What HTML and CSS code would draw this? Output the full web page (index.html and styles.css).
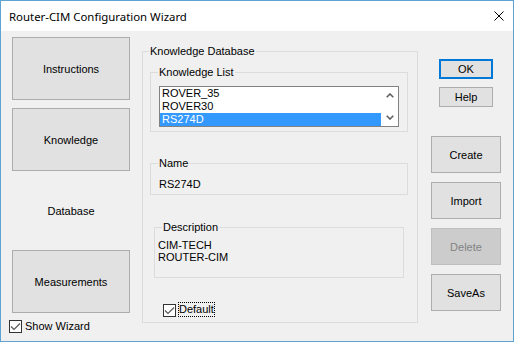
FILE: index.html
```html
<!DOCTYPE html>
<html>
<head>
<meta charset="utf-8">
<link rel="stylesheet" href="styles.css">
</head>
<body>
<div class="window">
  <div class="titlebar">
    <span class="title">Router-CIM Configuration Wizard</span>
    <svg class="close" width="10" height="10" viewBox="0 0 10 10"><path d="M0.5 0.5 L9.5 9.5 M9.5 0.5 L0.5 9.5" stroke="#000" stroke-width="1" fill="none"/></svg>
  </div>
  <div class="client">
    <div class="nav">
      <button class="btn navbtn">Instructions</button>
      <button class="btn navbtn">Knowledge</button>
      <div class="navlabel">Database</div>
      <button class="btn navbtn">Measurements</button>
      <label class="check show">
        <span class="box"><svg width="11" height="11" viewBox="0 0 11 11"><path d="M1 5.5 L4 8.5 L10 2.5" stroke="#555" stroke-width="1.1" fill="none"/></svg></span>
        <span class="check-text">Show Wizard</span>
      </label>
    </div>

    <fieldset class="group outer">
      <legend>Knowledge Database</legend>
      <fieldset class="group list-group">
        <legend>Knowledge List</legend>
        <div class="listbox">
          <ul class="items">
            <li>ROVER_35</li>
            <li>ROVER30</li>
            <li class="sel">RS274D</li>
          </ul>
          <div class="scroll">
            <svg width="8" height="5" viewBox="0 0 8 5"><path d="M0.7 4.3 L4 1 L7.3 4.3" stroke="#606060" stroke-width="1.6" fill="none"/></svg>
            <svg width="8" height="5" viewBox="0 0 8 5"><path d="M0.7 0.7 L4 4 L7.3 0.7" stroke="#606060" stroke-width="1.6" fill="none"/></svg>
          </div>
        </div>
      </fieldset>
      <fieldset class="group name-group">
        <legend>Name</legend>
        <div class="value">RS274D</div>
      </fieldset>
      <fieldset class="group desc-group">
        <legend>Description</legend>
        <div class="desc">CIM-TECH<br>ROUTER-CIM</div>
      </fieldset>
      <label class="check default">
        <span class="box"><svg width="11" height="11" viewBox="0 0 11 11"><path d="M1 5.5 L4 8.5 L10 2.5" stroke="#555" stroke-width="1.1" fill="none"/></svg></span>
        <span class="focus">Default</span>
      </label>
    </fieldset>

    <div class="actions">
      <button class="btn small ok">OK</button>
      <button class="btn small help">Help</button>
      <button class="btn big create">Create</button>
      <button class="btn big">Import</button>
      <button class="btn big disabled">Delete</button>
      <button class="btn big">SaveAs</button>
    </div>
  </div>
</div>
</body>
</html>
```

FILE: styles.css
```css
* { box-sizing: border-box; }
html, body { margin: 0; padding: 0; }
body {
  font-family: "Liberation Sans", Arial, sans-serif;
  font-size: 11px;
  color: #000;
  background: #fff;
}
.window {
  width: 514px;
  height: 342px;
  border: 1px solid #5ea3d4;
  display: flex;
  flex-direction: column;
  background: #f0f0f0;
}
.titlebar {
  flex: none;
  height: 30px;
  background: #fff;
  display: flex;
  align-items: center;
  justify-content: space-between;
  padding: 0 9px 0 8px;
}
.title {
  font-family: "Segoe UI", "Noto Sans", sans-serif;
  font-size: 11.4px;
}
.close { display: block; }

.client {
  flex: 1;
  display: flex;
  align-items: flex-start;
  padding: 6px 0 0 8px;
}

.btn {
  font: inherit;
  color: #000;
  background: #e1e1e1;
  border: 1px solid #adadad;
  padding: 0;
  margin: 0;
  display: flex;
  align-items: center;
  justify-content: center;
}

.nav {
  width: 121px;
  flex: none;
  display: flex;
  flex-direction: column;
  gap: 8px;
}
.navbtn, .navlabel {
  margin-left: 3px;
  width: 118px;
  height: 63px;
}
.navlabel {
  display: flex;
  align-items: center;
  justify-content: center;
}

.check {
  display: flex;
  align-items: flex-end;
}
.box {
  width: 13px;
  height: 13px;
  border: 1px solid #333;
  background: #fff;
  display: block;
  flex: none;
}
.box svg { display: block; }
.show {
  margin-top: -1px;
  height: 13px;
  align-items: center;
}
.check-text { margin-left: 3px; line-height: 13px; }

.group {
  margin: 0;
  padding: 0;
  border: 1px solid #dcdcdc;
  min-width: 0;
}
.group > legend {
  padding: 0 1px;
  margin-left: 6px;
  line-height: 13px;
  height: 13px;
}
.outer {
  flex: none;
  margin: 8px 0 0 12px;
  width: 276px;
  padding-bottom: 5px;
}
.list-group {
  margin: 8px 0 0 7px;
  width: 258px;
  padding-bottom: 4px;
}
.list-group > legend, .name-group > legend, .desc-group > legend { margin-left: 7px; }

.listbox {
  margin: 7px 0 0 8px;
  width: 240px;
  height: 41px;
  border: 1px solid #828282;
  background: #fff;
  display: flex;
}
.items {
  list-style: none;
  margin: 0;
  padding: 0;
  flex: 1;
}
.items li {
  height: 13px;
  line-height: 13px;
  padding-left: 2px;
}
.items li.sel {
  background: #3399ff;
  color: #fff;
}
.scroll {
  width: 17px;
  flex: none;
  display: flex;
  flex-direction: column;
  justify-content: space-between;
  align-items: center;
  padding: 6px 0;
}
.scroll svg { display: block; }

.name-group {
  margin: 25px 0 0 7px;
  width: 258px;
  padding-bottom: 3px;
}
.value {
  margin: 8px 0 0 8px;
  line-height: 13px;
}
.desc-group {
  margin: 26px 0 0 11px;
  width: 250px;
  padding-bottom: 14px;
}
.desc {
  margin: 5px 0 0 3px;
  line-height: 12px;
}

.default {
  margin: 24px 0 0 20px;
  height: 15px;
}
.focus {
  margin-left: 2px;
  height: 15px;
  line-height: 13px;
  border: 1px dotted #000;
}

.actions {
  flex: none;
  width: 70px;
  margin: 22px 0 0 13px;
  display: flex;
  flex-direction: column;
}
.small {
  margin-left: 8px;
  width: 54px;
  height: 20px;
}
.ok { border: 2px solid #0078d7; }
.help { margin-top: 8px; }
.big {
  width: 70px;
  height: 37px;
  margin-top: 9px;
}
.create { margin-top: 29px; }
.disabled {
  background: #cccccc;
  border-color: #bfbfbf;
  color: #838383;
}
```
